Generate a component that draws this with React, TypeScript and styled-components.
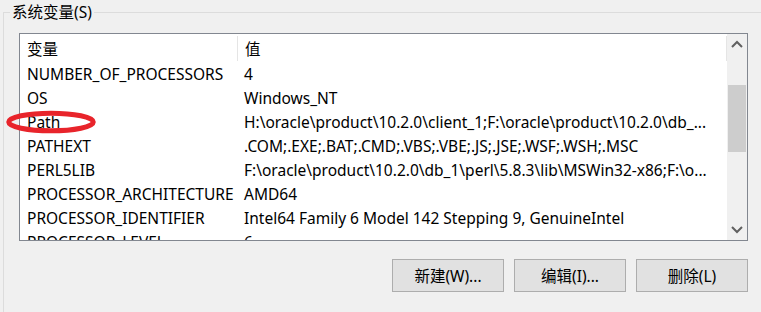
import React from 'react'
import styled, { createGlobalStyle } from 'styled-components'

const GlobalStyle = createGlobalStyle`
  html, body {
    margin: 0;
    padding: 0;
    background: #f0f0f0;
  }
  body {
    width: 761px;
    height: 312px;
    overflow: hidden;
    font-family: "Noto Sans", "Noto Sans CJK SC", sans-serif;
    font-size: 15.5px;
    color: #000;
  }
`

const GroupBox = styled.fieldset`
  margin: 4px 0 0 3px;
  padding: 0 13px 0 15px;
  height: 320px;
  border: none;
  border-top: 1px solid #dcdcdc;
  border-left: 1px solid #dcdcdc;
  box-sizing: border-box;
`

const Legend = styled.legend`
  margin-left: -9px;
  padding: 0 2px;
  font-size: 15.5px;
  line-height: 17px;
  color: #000;
`

const ListBox = styled.div`
  position: relative;
  display: flex;
  margin-top: 12px;
  width: 729px;
  height: 208px;
  border: 1px solid #828790;
  background: #fff;
  box-sizing: border-box;
`

const Table = styled.div`
  flex: 1;
  display: flex;
  flex-direction: column;
  overflow: hidden;
  padding-top: 1px;
`

const HeaderRow = styled.div`
  display: flex;
  flex: none;
  height: 27px;
  align-items: center;
`

const HeaderCell = styled.div<{ $w?: number }>`
  ${({ $w }) => ($w ? `width: ${$w}px; flex: none;` : 'flex: 1;')}
  height: 25px;
  display: flex;
  align-items: center;
  padding-left: 7px;
  box-sizing: border-box;
  border-right: 1px solid #e5e5e5;
`

const Row = styled.div`
  display: flex;
  flex: none;
  height: 24px;
  align-items: center;
  white-space: nowrap;
`

const Cell = styled.div<{ $w?: number }>`
  ${({ $w }) => ($w ? `width: ${$w}px; flex: none;` : 'flex: 1;')}
  padding-left: 7px;
  box-sizing: border-box;
  overflow: hidden;
`

const ScrollBar = styled.div`
  flex: none;
  width: 20px;
  background: #f0f0f0;
  display: flex;
  flex-direction: column;
`

const ArrowBox = styled.div`
  height: 20px;
  display: flex;
  align-items: center;
  justify-content: center;
  flex: none;
`

const Track = styled.div`
  flex: 1;
  display: flex;
  flex-direction: column;
  padding: 31px 1px 0;
`

const Thumb = styled.div`
  height: 67px;
  background: #cdcdcd;
`

const Mark = styled.svg`
  position: absolute;
  left: -17px;
  top: 75px;
  pointer-events: none;
`

const ButtonBar = styled.div`
  display: flex;
  justify-content: flex-end;
  gap: 10px;
  width: 729px;
  margin-top: 18px;
`

const Button = styled.button`
  width: 112px;
  height: 33px;
  background: #e1e1e1;
  border: 1px solid #adadad;
  font-family: "Noto Sans", "Noto Sans CJK SC", sans-serif;
  font-size: 15.5px;
  color: #000;
  padding: 0;
`

const Chevron: React.FC<{ up?: boolean }> = ({ up }) => (
  <svg width="12" height="8" viewBox="0 0 12 8">
    <polyline
      points={up ? '1,7 6,2 11,7' : '1,1 6,6 11,1'}
      fill="none"
      stroke="#606060"
      strokeWidth="2"
    />
  </svg>
)

const vars: [string, string][] = [
  ['NUMBER_OF_PROCESSORS', '4'],
  ['OS', 'Windows_NT'],
  ['Path', 'H:\\oracle\\product\\10.2.0\\client_1;F:\\oracle\\product\\10.2.0\\db_...'],
  ['PATHEXT', '.COM;.EXE;.BAT;.CMD;.VBS;.VBE;.JS;.JSE;.WSF;.WSH;.MSC'],
  ['PERL5LIB', 'F:\\oracle\\product\\10.2.0\\db_1\\perl\\5.8.3\\lib\\MSWin32-x86;F:\\o...'],
  ['PROCESSOR_ARCHITECTURE', 'AMD64'],
  ['PROCESSOR_IDENTIFIER', 'Intel64 Family 6 Model 142 Stepping 9, GenuineIntel'],
  ['PROCESSOR_LEVEL', '6'],
]

const App: React.FC = () => {
  return (
    <>
      <GlobalStyle />
      <GroupBox>
        <Legend>系统变量(S)</Legend>
        <ListBox>
          <Table>
            <HeaderRow>
              <HeaderCell $w={218}>变量</HeaderCell>
              <HeaderCell>值</HeaderCell>
            </HeaderRow>
            {vars.map(([name, value]) => (
              <Row key={name}>
                <Cell $w={217}>{name}</Cell>
                <Cell>{value}</Cell>
              </Row>
            ))}
          </Table>
          <ScrollBar>
            <ArrowBox>
              <Chevron up />
            </ArrowBox>
            <Track>
              <Thumb />
            </Track>
            <ArrowBox>
              <Chevron />
            </ArrowBox>
          </ScrollBar>
          <Mark width="96" height="26" viewBox="0 0 96 26">
            <ellipse cx="48" cy="13" rx="42.3" ry="8.8" fill="none" stroke="#e8242b" strokeWidth="5" />
          </Mark>
        </ListBox>
        <ButtonBar>
          <Button>新建(W)...</Button>
          <Button>编辑(I)...</Button>
          <Button>删除(L)</Button>
        </ButtonBar>
      </GroupBox>
    </>
  )
}

export default App
